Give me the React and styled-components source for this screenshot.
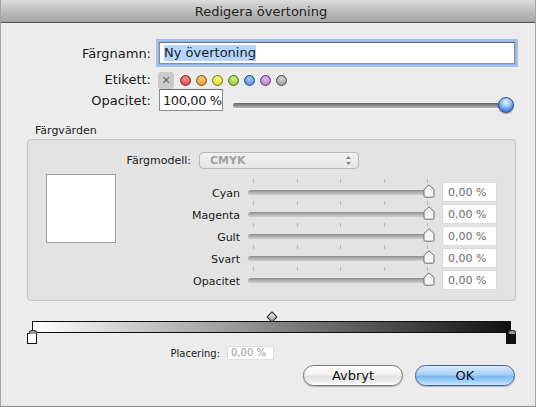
import styled, { createGlobalStyle } from 'styled-components';

const GlobalStyle = createGlobalStyle`
  body {
    margin: 0;
    background: #ececec;
    font-family: "DejaVu Sans", "Noto Sans", sans-serif;
    color: #1a1a1a;
  }
`

const Window = styled.div`
  box-sizing: border-box;
  width: 536px;
  height: 407px;
  background: #ececec;
  border-left: 1px solid #a4a4a4;
  border-right: 1px solid #a4a4a4;
  border-bottom: 1px solid #8c8c8c;
  display: flex;
  flex-direction: column;
  overflow: hidden;
`

const TitleBar = styled.div`
  height: 22px;
  flex: none;
  border-bottom: 1px solid #505050;
  background: linear-gradient(#dcdcdc, #bdbdbd 50%, #a6a6a6);
  display: flex;
  align-items: center;
  justify-content: center;
  font-size: 13px;
  color: #222;
  padding-right: 14px;
`

const TopForm = styled.div`
  display: grid;
  grid-template-columns: 150px 1fr;
  grid-template-rows: 22px 25px 22px;
  column-gap: 8px;
  margin: 19px 20px 0 0;
`

const Label = styled.div`
  text-align: right;
  font-size: ${p => p.$size || 13}px;
  align-self: ${p => p.$align || 'center'};
  line-height: ${p => p.$lh || 'normal'};
  white-space: nowrap;
`

const TextField = styled.div`
  box-sizing: border-box;
  flex: none;
  height: 22px;
  width: ${p => p.$width || 'auto'};
  background: #fff;
  border: 1px solid #8e8e8e;
  border-top-color: #6f6f6f;
  font-size: 13px;
  white-space: nowrap;
  overflow: hidden;
  display: flex;
  align-items: center;
  padding: 0 ${p => p.$pad || 4}px;
  letter-spacing: ${p => p.$ls || 0}px;
  box-shadow: ${p => p.$focus ? '0 0 0 1px #8fb3e8, 0 0 0 3px rgba(112,160,230,0.55)' : 'none'};
`

const Selected = styled.span`
  background: #b5d5ff;
  line-height: 16px;
`

const TagRow = styled.div`
  display: flex;
  align-items: center;
  height: 18px;
  align-self: end;
  margin-left: -1px;
`

const ClearTag = styled.div`
  width: 16px;
  height: 17px;
  border-radius: 3px;
  background: #c9c9c9;
  color: #6a6a6a;
  font-size: 11px;
  display: flex;
  align-items: center;
  justify-content: center;
  margin-right: 3px;
`

const Dot = styled.div`
  box-sizing: border-box;
  width: 11px;
  height: 11px;
  border-radius: 50%;
  margin: 0 2.5px;
  background: radial-gradient(circle at 50% 35%, ${p => p.$light}, ${p => p.$color} 70%);
  border: 1px solid ${p => p.$edge};
`

const OpacityRow = styled.div`
  display: flex;
  align-items: flex-start;
`

const MainSlider = styled.div`
  position: relative;
  flex: 1;
  height: 16px;
  margin: 8px 0 0 10px;
  display: flex;
  align-items: center;
`

const MainTrack = styled.div`
  flex: 1;
  height: 5px;
  margin-right: 8px;
  border-radius: 3px;
  background: linear-gradient(#5e5e5e, #8a8a8a 45%, #b4b4b4);
  box-shadow: 0 1px 0 rgba(255,255,255,0.6);
`

const BlueKnob = styled.div`
  position: absolute;
  right: 1px;
  top: 0;
  box-sizing: border-box;
  width: 16px;
  height: 16px;
  border-radius: 50%;
  border: 1px solid #2e4d8f;
  background: radial-gradient(circle at 50% 30%, #eaf4ff 0%, #9cc6f5 35%, #3f7fd6 75%, #2d63b8 100%);
  box-shadow: 0 1px 1px rgba(0,0,0,0.35);
`

const GroupTitle = styled.div`
  font-size: 11px;
  margin: 13px 0 2px 34px;
  line-height: 13px;
  color: #222;
`

const GroupBox = styled.div`
  box-sizing: border-box;
  height: 162px;
  margin: 0 19px 0 26px;
  border: 1px solid #c4c4c4;
  border-radius: 4px;
  background: #e3e3e3;
  display: flex;
  flex-direction: column;
`

const ModelRow = styled.div`
  display: flex;
  align-items: center;
  margin-top: 12px;
`

const ModelLabel = styled.div`
  width: 163px;
  text-align: right;
  font-size: 11px;
  margin-right: 8px;
`

const Popup = styled.div`
  box-sizing: border-box;
  width: 160px;
  height: 17px;
  border: 1px solid #b9b9b9;
  border-radius: 4px;
  background: linear-gradient(#f2f2f2, #e6e6e6);
  display: flex;
  align-items: center;
  justify-content: space-between;
  padding: 0 6px 0 10px;
  font-size: 11px;
  font-weight: bold;
  color: #a0a0a0;
`

const ColorArea = styled.div`
  display: flex;
  margin-top: 5px;
`

const Swatch = styled.div`
  box-sizing: border-box;
  width: 70px;
  height: 69px;
  margin-left: 18px;
  background: #fff;
  border: 1px solid #9d9d9d;
`

const SliderList = styled.div`
  display: flex;
  flex-direction: column;
  padding-top: 7px;
`

const SliderRow = styled.div`
  display: grid;
  grid-template-columns: 124px 184px 57px;
  column-gap: 8px;
  height: 22px;
  align-items: center;
`

const SliderLabel = styled.div`
  text-align: right;
  font-size: 11px;
  padding-top: 2px;
`

const SmallTrackCell = styled.div`
  position: relative;
  height: 22px;
`

const Ticks = styled.div`
  position: absolute;
  left: 5px;
  right: 4px;
  top: -2px;
  display: flex;
  justify-content: space-between;
`

const Tick = styled.div`
  width: 1px;
  height: 4px;
  background: #b8b8b8;
`

const SmallTrack = styled.div`
  position: absolute;
  left: 0;
  right: 4px;
  top: 9px;
  height: 5px;
  border-radius: 3px;
  background: linear-gradient(#8d8d8d, #b0b0b0 50%, #cdcdcd);
`

const KnobSvg = styled.svg`
  position: absolute;
  right: -3px;
  top: 3px;
`

const ValueBox = styled.div`
  box-sizing: border-box;
  height: 20px;
  background: #fff;
  border: 1px solid #dadada;
  font-size: 11px;
  color: #6a6a6a;
  display: flex;
  align-items: center;
  padding-left: 5px;
  margin-left: 2px;
`

const GradientEditor = styled.div`
  position: relative;
  margin: 11px 24px 0 31px;
  height: 33px;
`

const Diamond = styled.div`
  position: absolute;
  top: 1px;
  width: 6px;
  height: 6px;
  transform: translateX(-50%) rotate(45deg);
  background: linear-gradient(135deg, #fff, #888);
  border: 1px solid #222;
`

const GradientBar = styled.div`
  position: absolute;
  top: 9px;
  left: 0;
  right: 0;
  box-sizing: border-box;
  height: 12px;
  border: 1.5px solid #111;
  background: linear-gradient(90deg, #ffffff, #7a7a78 55%, #111 100%);
`

const Stop = styled.div`
  position: absolute;
  top: 21px;
  transform: translateX(-50%);
  box-sizing: border-box;
  width: 10px;
  height: 11px;
  border: 1px solid #111;
  background: ${p => p.$fill};
  &::before {
    content: '';
    position: absolute;
    left: 1px;
    top: -4px;
    width: 6px;
    height: 3px;
    border-radius: 3px 3px 0 0;
    background: #999;
    border: 1px solid #333;
    border-bottom: none;
  }
`

const PlaceRow = styled.div`
  display: flex;
  align-items: center;
  margin: 1px 0 0 0;
`

const PlaceLabel = styled.div`
  width: 219px;
  text-align: right;
  font-size: 10px;
  margin-right: 7px;
`

const PlaceField = styled.div`
  box-sizing: border-box;
  width: 47px;
  height: 14px;
  background: #fff;
  border: 1px solid #dedede;
  font-size: 10px;
  color: #9a9a9a;
  padding-left: 3px;
  line-height: 12px;
`

const ButtonRow = styled.div`
  display: flex;
  justify-content: flex-end;
  gap: 12px;
  margin: 5px 20px 0 0;
`

const AquaButton = styled.div`
  box-sizing: border-box;
  width: 100px;
  height: 21px;
  border-radius: 11px;
  border: 1px solid ${p => p.$primary ? '#4a5fa0' : '#7a7a7a'};
  background: ${p => p.$primary
    ? 'linear-gradient(#d6e9fd, #a9d0f7 45%, #7db9f0 55%, #a8d7fb 85%, #cbeafe)'
    : 'linear-gradient(#ffffff, #f3f3f3 45%, #e2e2e2 55%, #efefef 85%, #ffffff)'};
  box-shadow: 0 1px 1px rgba(0,0,0,0.25);
  display: flex;
  align-items: center;
  justify-content: center;
  font-size: 13px;
  color: #111;
`

const dots = [
  { color: '#e84b4b', light: '#f8a0a0', edge: '#7a2a2a' },
  { color: '#f0a030', light: '#fbd08a', edge: '#7d5516' },
  { color: '#e5de2e', light: '#f6f29a', edge: '#7a7520' },
  { color: '#9ccf38', light: '#d2ee96', edge: '#4f6e1a' },
  { color: '#4e96ea', light: '#a9cdf8', edge: '#234f86' },
  { color: '#bb80d4', light: '#e2c4ee', edge: '#5f3c70' },
  { color: '#a4a4a4', light: '#d6d6d6', edge: '#4d4d4d' },
]

const channels = ['Cyan', 'Magenta', 'Gult', 'Svart', 'Opacitet']

const stops = [
  { pos: 0, fill: '#fff' },
  { pos: 100, fill: '#111' },
]

const SliderKnob = () => (
  <KnobSvg width="12" height="14" viewBox="0 0 12 14">
    <path d="M6 0.8 L11 5.5 L11 12 Q11 13.2 9.8 13.2 L2.2 13.2 Q1 13.2 1 12 L1 5.5 Z"
      fill="#f4f4f4" stroke="#6e6e6e" strokeWidth="1" />
  </KnobSvg>
)

const PopupArrows = () => (
  <svg width="7" height="11" viewBox="0 0 7 11">
    <path d="M3.5 1 L6 4 L1 4 Z" fill="#8a8a8a" />
    <path d="M3.5 10 L6 7 L1 7 Z" fill="#8a8a8a" />
  </svg>
)

const App = () => {
  return (
    <>
      <GlobalStyle />
      <Window>
        <TitleBar>Redigera övertoning</TitleBar>

        <TopForm>
          <Label>Färgnamn:</Label>
          <TextField $focus><Selected>Ny övertoning</Selected></TextField>

          <Label $align="end" $lh="18px">Etikett:</Label>
          <TagRow>
            <ClearTag>✕</ClearTag>
            {dots.map(d => (
              <Dot key={d.color} $color={d.color} $light={d.light} $edge={d.edge} />
            ))}
          </TagRow>

          <Label>Opacitet:</Label>
          <OpacityRow>
            <TextField $width="64px" $pad={3} $ls={-0.4}>100,00 %</TextField>
            <MainSlider>
              <MainTrack />
              <BlueKnob />
            </MainSlider>
          </OpacityRow>
        </TopForm>

        <GroupTitle>Färgvärden</GroupTitle>
        <GroupBox>
          <ModelRow>
            <ModelLabel>Färgmodell:</ModelLabel>
            <Popup>CMYK<PopupArrows /></Popup>
          </ModelRow>
          <ColorArea>
            <Swatch />
            <SliderList>
              {channels.map(name => (
                <SliderRow key={name}>
                  <SliderLabel>{name}</SliderLabel>
                  <SmallTrackCell>
                    <Ticks>
                      {[0, 1, 2, 3, 4].map(i => <Tick key={i} />)}
                    </Ticks>
                    <SmallTrack />
                    <SliderKnob />
                  </SmallTrackCell>
                  <ValueBox>0,00 %</ValueBox>
                </SliderRow>
              ))}
            </SliderList>
          </ColorArea>
        </GroupBox>

        <GradientEditor>
          <Diamond style={{ left: '50%' }} />
          <GradientBar />
          {stops.map(s => (
            <Stop key={s.pos} $fill={s.fill} style={{ left: `${s.pos}%` }} />
          ))}
        </GradientEditor>

        <PlaceRow>
          <PlaceLabel>Placering:</PlaceLabel>
          <PlaceField>0,00 %</PlaceField>
        </PlaceRow>

        <ButtonRow>
          <AquaButton>Avbryt</AquaButton>
          <AquaButton $primary>OK</AquaButton>
        </ButtonRow>
      </Window>
    </>
  )
}

export default App
